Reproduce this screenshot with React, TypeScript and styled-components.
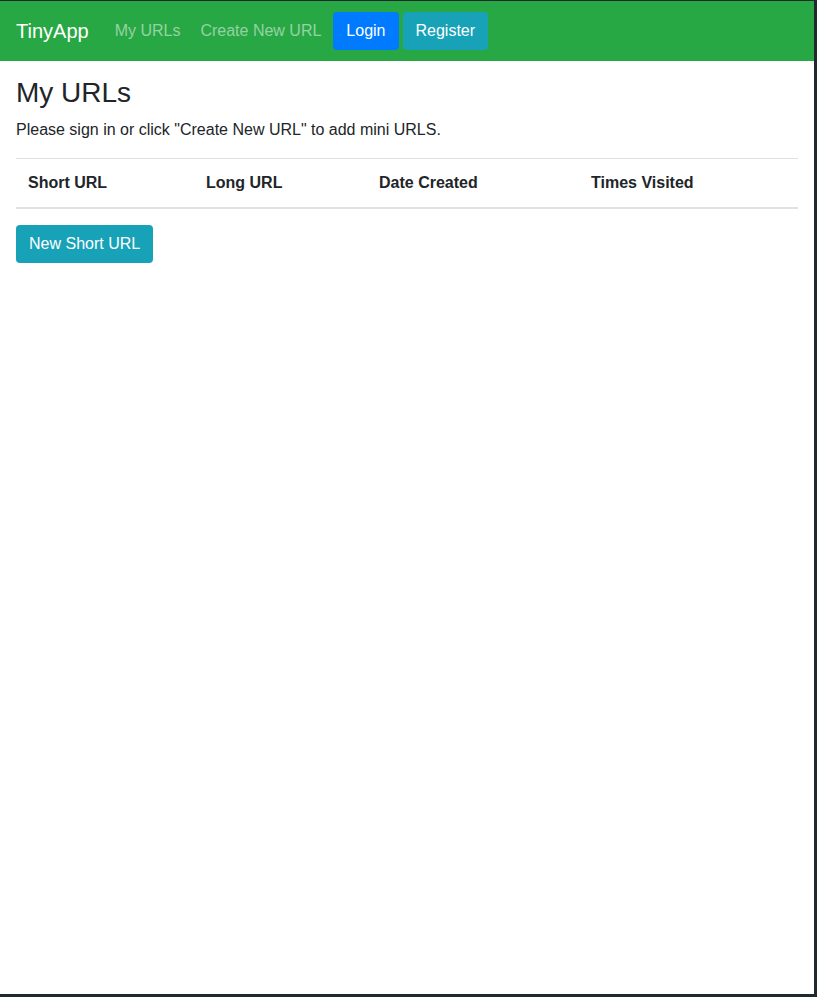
import React from "react";
import styled, { createGlobalStyle } from "styled-components";

const GlobalStyle = createGlobalStyle`
  html, body {
    margin: 0;
    padding: 0;
    background: #1f2a2e;
  }
  body {
    font-family: "Liberation Sans", Arial, sans-serif;
    font-size: 16px;
    line-height: 1.5;
    color: #212529;
  }
  * {
    box-sizing: border-box;
  }
`;

type Column = {
  label: string;
  width: number;
};

const columns: Column[] = [
  { label: "Short URL", width: 178 },
  { label: "Long URL", width: 173 },
  { label: "Date Created", width: 212 },
  { label: "Times Visited", width: 219 },
];

export default function App() {
  return (
    <>
      <GlobalStyle />
      <Page>
        <Navbar>
          <Brand href="#">TinyApp</Brand>
          <NavLink href="#">My URLs</NavLink>
          <NavLink href="#">Create New URL</NavLink>
          <NavButton variant="primary">Login</NavButton>
          <NavButton variant="info">Register</NavButton>
        </Navbar>

        <Main>
          <Title>My URLs</Title>
          <Lead>Please sign in or click "Create New URL" to add mini URLS.</Lead>

          <Table>
            <thead>
              <tr>
                {columns.map((col) => (
                  <Th key={col.label} $width={col.width}>
                    {col.label}
                  </Th>
                ))}
              </tr>
            </thead>
            <tbody />
          </Table>

          <InfoButton>New Short URL</InfoButton>
        </Main>
      </Page>
    </>
  );
}

// ---------- Styled Components ----------

const Page = styled.div`
  margin: 1px 3px 0 0;
  width: 814px;
  height: 993px;
  background: #ffffff;
`;

const Navbar = styled.nav`
  display: flex;
  align-items: center;
  height: 60px;
  padding: 0 16px;
  background: #28a745;
`;

const Brand = styled.a`
  font-size: 20px;
  line-height: 30px;
  color: #ffffff;
  text-decoration: none;
  margin-right: 16px;
`;

const NavLink = styled.a`
  padding: 8px 10px;
  line-height: 24px;
  color: rgba(255, 255, 255, 0.5);
  text-decoration: none;
`;

const NavButton = styled.button<{ variant: "primary" | "info" }>`
  margin-left: ${({ variant }) => (variant === "primary" ? "2px" : "4px")};
  padding: 6px 12px;
  border: 1px solid transparent;
  border-radius: 4px;
  background: ${({ variant }) => (variant === "primary" ? "#007bff" : "#17a2b8")};
  color: #ffffff;
  font-family: inherit;
  font-size: 16px;
  line-height: 24px;
  cursor: pointer;
`;

const Main = styled.main`
  padding: 15px 16px 0;
`;

const Title = styled.h3`
  margin: 0 0 8px;
  font-size: 28px;
  font-weight: 500;
  line-height: 1.2;
`;

const Lead = styled.p`
  margin: 0 0 16px;
`;

const Table = styled.table`
  width: 100%;
  margin-bottom: 16px;
  border-collapse: collapse;
  table-layout: fixed;
`;

const Th = styled.th<{ $width: number }>`
  width: ${({ $width }) => $width}px;
  padding: 12px;
  text-align: left;
  font-weight: 700;
  border-top: 1px solid #dee2e6;
  border-bottom: 2px solid #dee2e6;
`;

const InfoButton = styled.button`
  padding: 6px 12px;
  border: 1px solid transparent;
  border-radius: 4px;
  background: #17a2b8;
  color: #ffffff;
  font-family: inherit;
  font-size: 16px;
  line-height: 24px;
  cursor: pointer;
`;
